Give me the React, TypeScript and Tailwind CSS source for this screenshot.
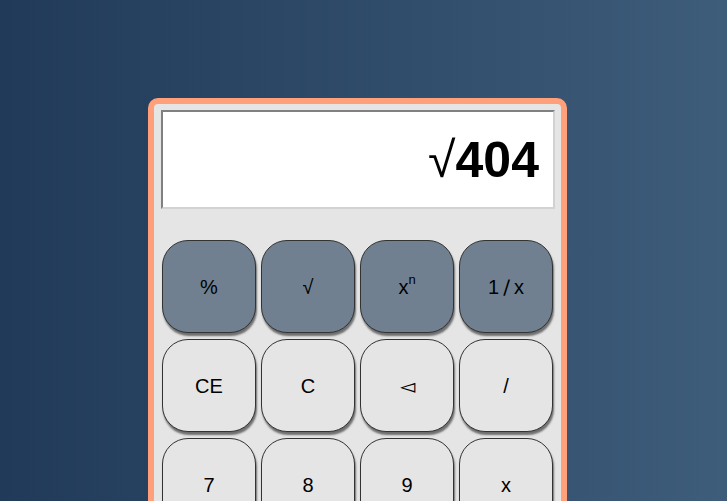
import React from "react";

const keys: { label: React.ReactNode; id: string; dark?: boolean }[] = [
  { id: "pct", label: "%", dark: true },
  { id: "sqrt", label: "√", dark: true },
  {
    id: "pow",
    label: (
      <>
        x<sup className="text-[13px]">n</sup>
      </>
    ),
    dark: true,
  },
  {
    id: "inv",
    label: (
      <>
        1<span className="mx-[4px] font-['DejaVu_Sans',sans-serif]">∕</span>x
      </>
    ),
    dark: true,
  },
  { id: "ce", label: "CE" },
  { id: "c", label: "C" },
  { id: "back", label: "◅" },
  { id: "div", label: "/" },
  { id: "7", label: "7" },
  { id: "8", label: "8" },
  { id: "9", label: "9" },
  { id: "mul", label: "x" },
  { id: "4", label: "4" },
  { id: "5", label: "5" },
  { id: "6", label: "6" },
  { id: "sub", label: "-" },
];

export default function App() {
  return (
    <div className="min-h-screen w-full bg-gradient-to-r from-[#213a59] to-[#3e5d7b] font-['Liberation_Sans',Arial,sans-serif]">
      <div className="flex justify-center pr-[12px] pt-[98px]">
        {/* Calculator */}
        <div className="w-[419px] rounded-[10px] border-[6px] border-[#ffa07a] bg-[#e5e5e5]">
          {/* Display */}
          <div className="pl-[7px] pr-[6px] pt-[6px]">
            <div className="flex h-[99px] items-center justify-end border-2 border-t-[#808080] border-l-[#808080] border-b-[#d2d2d2] border-r-[#d2d2d2] bg-white pr-[14px] text-[50px] leading-none text-black">
              <span className="font-normal">√</span>
              <span className="font-bold">404</span>
            </div>
          </div>

          {/* Keypad */}
          <div className="grid grid-cols-4 gap-x-[5px] gap-y-[6px] px-[8px] pt-[31px] pb-[8px]">
            {keys.map((k) => (
              <button
                key={k.id}
                className={`flex h-[93px] items-center justify-center rounded-[26px] border border-[#333] text-[20px] text-black shadow-[1px_3px_2px_#6e6e6e] ${
                  k.dark ? "bg-[#708090]" : "bg-[#e5e5e5]"
                }`}
              >
                {k.label}
              </button>
            ))}
          </div>
        </div>
      </div>
    </div>
  );
}
